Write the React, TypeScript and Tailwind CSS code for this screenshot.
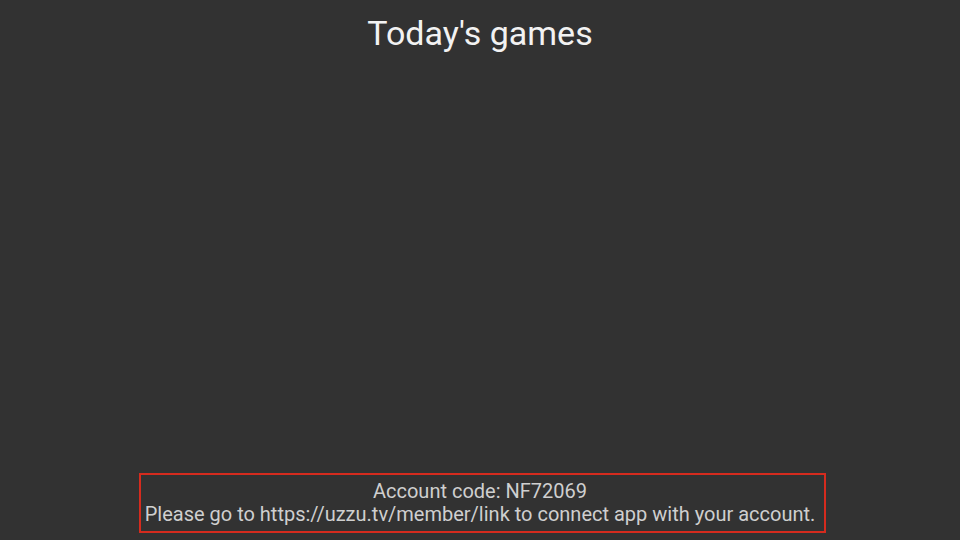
export default function App() {
  return (
    <main className="flex h-[540px] w-[960px] flex-col items-center bg-[#323232] font-['Roboto',sans-serif]">
      <h1 className="mt-[11px] text-[34px] leading-[44px] text-[#f2f2f2]">Today's games</h1>
      <div className="flex-1" />
      <div className="mb-[7px] ml-[5px] w-[687px] border-2 border-[#d52b1e] py-[5px] pr-[5px] text-center text-[20px] leading-[23px] text-[#cfcfcf]">
        <p>Account code: NF72069</p>
        <p>Please go to https://uzzu.tv/member/link to connect app with your account.</p>
      </div>
    </main>
  );
}
